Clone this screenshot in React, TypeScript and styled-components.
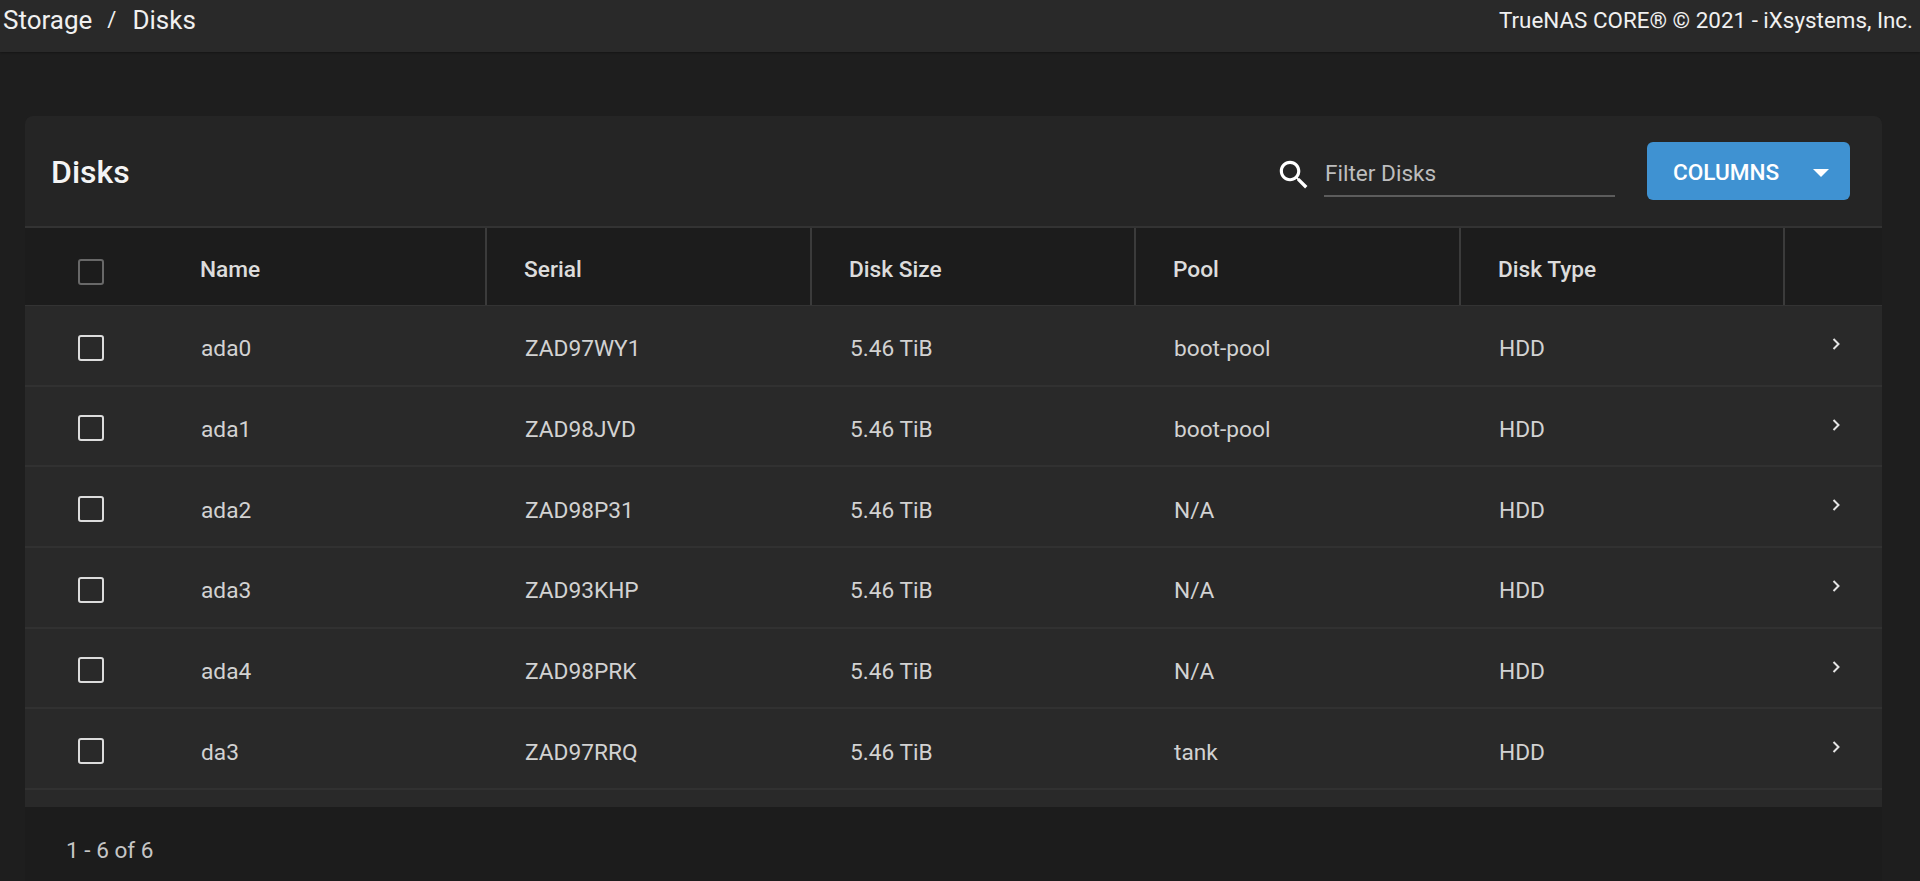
import React from 'react';
import styled, { createGlobalStyle } from 'styled-components';

const GlobalStyle = createGlobalStyle`
  * {
    margin: 0;
    padding: 0;
    box-sizing: border-box;
  }
  body {
    font-family: Roboto, "Liberation Sans", sans-serif;
    background-color: #1e1e1e;
    overflow: hidden;
  }
`;

const Page = styled.div`
  display: flex;
  flex-direction: column;
  height: 881px;
  background-color: #1e1e1e;
`;

const TopBar = styled.header`
  display: flex;
  justify-content: space-between;
  align-items: flex-start;
  height: 52px;
  padding: 4px 7px 0 3px;
  background-color: #292929;
  box-shadow: 0 1px 2px rgba(0, 0, 0, 0.3);
  color: #f0f0f0;
  font-size: 26px;
  line-height: 32px;
`;

const Crumbs = styled.div`
  display: flex;
`;

const CrumbSep = styled.span`
  margin: 0 16px 0 15px;
  font-size: 22px;
`;

const Copyright = styled.div`
  font-size: 22.4px;
`;

const Content = styled.main`
  flex: 1;
  display: flex;
  padding: 64px 38px 0 25px;
  min-height: 0;
`;

const Panel = styled.section`
  flex: 1;
  display: flex;
  flex-direction: column;
  border-radius: 8px 8px 0 0;
  overflow: hidden;
  background-color: #1c1c1c;
`;

const TitleBar = styled.div`
  display: flex;
  align-items: center;
  height: 112px;
  padding: 0 32px 0 26px;
  background-color: #252525;
  border-bottom: 2px solid #333333;
`;

const Title = styled.h1`
  flex: 1;
  font-size: 32px;
  font-weight: 500;
  color: #f4f4f4;
  margin-top: 2px;
`;

const Filter = styled.div`
  display: flex;
  align-items: flex-start;
  margin: 7px 32px 0 0;
`;

const SearchIcon = styled.svg`
  width: 38px;
  height: 38px;
  margin-right: 11px;
  margin-top: 3px;
  fill: #ffffff;
`;

const FilterInput = styled.div`
  width: 291px;
  height: 44px;
  padding: 7px 2px 0 1px;
  border-bottom: 2px solid #5c5c5c;
  color: #bdbdbd;
  font-size: 22.6px;
  line-height: 27px;
`;

const ColumnsButton = styled.button`
  display: flex;
  align-items: center;
  justify-content: space-between;
  width: 203px;
  height: 58px;
  padding: 3px 21px 0 26px;
  border: none;
  border-radius: 6px;
  background-color: #3f92d2;
  color: #ffffff;
  font-family: inherit;
  font-size: 22.6px;
  font-weight: 500;
`;

const Caret = styled.svg`
  width: 16px;
  height: 8px;
  margin-top: 1px;
  fill: #ffffff;
`;

const gridColumns = '138px 324px 325px 324px 325px 324px 97px';

const HeaderRow = styled.div`
  display: grid;
  grid-template-columns: ${gridColumns};
  height: 78px;
  background-color: #1c1c1c;
  border-bottom: 1px solid #333333;
`;

const HeaderCell = styled.div<{ $divided?: boolean }>`
  display: flex;
  align-items: center;
  padding: 6px 0 0 37px;
  color: #dcdcdc;
  font-size: 22.7px;
  font-weight: 500;
  border-right: ${(p) => (p.$divided ? '2px solid #3b3b3b' : 'none')};
`;

const CheckCell = styled.div<{ $head?: boolean }>`
  display: flex;
  align-items: center;
  justify-content: center;
  padding: ${(p) => (p.$head ? '10px' : '5px')} 6px 0 0;
`;

const Checkbox = styled.span<{ $muted?: boolean }>`
  display: block;
  width: 26px;
  height: 26px;
  border: 2.6px solid ${(p) => (p.$muted ? '#686868' : '#dcdcdc')};
  border-radius: 3px;
`;

const Body = styled.div`
  flex: 1;
  display: flex;
  flex-direction: column;
  background-color: #292929;
`;

const Row = styled.div`
  display: grid;
  grid-template-columns: ${gridColumns};
  height: 80.67px;
  flex: none;
  border-bottom: 2px solid #313131;
`;

const Cell = styled.div`
  display: flex;
  align-items: center;
  padding: 7px 0 0 38px;
  color: #d2d2d2;
  font-size: 22.7px;
`;

const ChevronCell = styled.div`
  display: flex;
  justify-content: flex-end;
  padding: 32px 42px 0 0;
`;

const Chevron = styled.svg`
  width: 8px;
  height: 12px;
  fill: none;
  stroke: #e4e4e4;
  stroke-width: 2;
`;

const Footer = styled.footer`
  display: flex;
  align-items: center;
  height: 74px;
  flex: none;
  padding: 12px 41px 0;
  background-color: #1c1c1c;
  color: #c6c6c6;
  font-size: 22.6px;
`;

const columns = ['Serial', 'Disk Size', 'Pool', 'Disk Type'];

const disks = [
  { name: 'ada0', serial: 'ZAD97WY1', size: '5.46 TiB', pool: 'boot-pool', type: 'HDD' },
  { name: 'ada1', serial: 'ZAD98JVD', size: '5.46 TiB', pool: 'boot-pool', type: 'HDD' },
  { name: 'ada2', serial: 'ZAD98P31', size: '5.46 TiB', pool: 'N/A', type: 'HDD' },
  { name: 'ada3', serial: 'ZAD93KHP', size: '5.46 TiB', pool: 'N/A', type: 'HDD' },
  { name: 'ada4', serial: 'ZAD98PRK', size: '5.46 TiB', pool: 'N/A', type: 'HDD' },
  { name: 'da3', serial: 'ZAD97RRQ', size: '5.46 TiB', pool: 'tank', type: 'HDD' },
];

export default function App() {
  return (
    <>
      <GlobalStyle />
      <Page>
        <TopBar>
          <Crumbs>
            <span>Storage</span>
            <CrumbSep>/</CrumbSep>
            <span>Disks</span>
          </Crumbs>
          <Copyright>TrueNAS CORE® © 2021 - iXsystems, Inc.</Copyright>
        </TopBar>
        <Content>
          <Panel>
            <TitleBar>
              <Title>Disks</Title>
              <Filter>
                <SearchIcon viewBox="0 0 24 24">
                  <path d="M15.5 14h-.79l-.28-.27C15.41 12.59 16 11.11 16 9.5 16 5.91 13.09 3 9.5 3S3 5.91 3 9.5 5.91 16 9.5 16c1.61 0 3.09-.59 4.23-1.57l.27.28v.79l5 4.99L20.49 19l-4.99-5zm-6 0C7.01 14 5 11.99 5 9.5S7.01 5 9.5 5 14 7.01 14 9.5 11.99 14 9.5 14z" />
                </SearchIcon>
                <FilterInput>Filter Disks</FilterInput>
              </Filter>
              <ColumnsButton>
                COLUMNS
                <Caret viewBox="0 0 16 8">
                  <path d="M0 0h16L8 8z" />
                </Caret>
              </ColumnsButton>
            </TitleBar>
            <HeaderRow>
              <CheckCell $head>
                <Checkbox $muted />
              </CheckCell>
              <HeaderCell $divided>Name</HeaderCell>
              {columns.map((c) => (
                <HeaderCell key={c} $divided>
                  {c}
                </HeaderCell>
              ))}
              <div />
            </HeaderRow>
            <Body>
              {disks.map((d) => (
                <Row key={d.name}>
                  <CheckCell>
                    <Checkbox />
                  </CheckCell>
                  <Cell>{d.name}</Cell>
                  <Cell>{d.serial}</Cell>
                  <Cell>{d.size}</Cell>
                  <Cell>{d.pool}</Cell>
                  <Cell>{d.type}</Cell>
                  <ChevronCell>
                    <Chevron viewBox="0 0 8 12">
                      <path d="M1.5 1l5 5-5 5" />
                    </Chevron>
                  </ChevronCell>
                </Row>
              ))}
            </Body>
            <Footer>1 - 6 of 6</Footer>
          </Panel>
        </Content>
      </Page>
    </>
  );
}
